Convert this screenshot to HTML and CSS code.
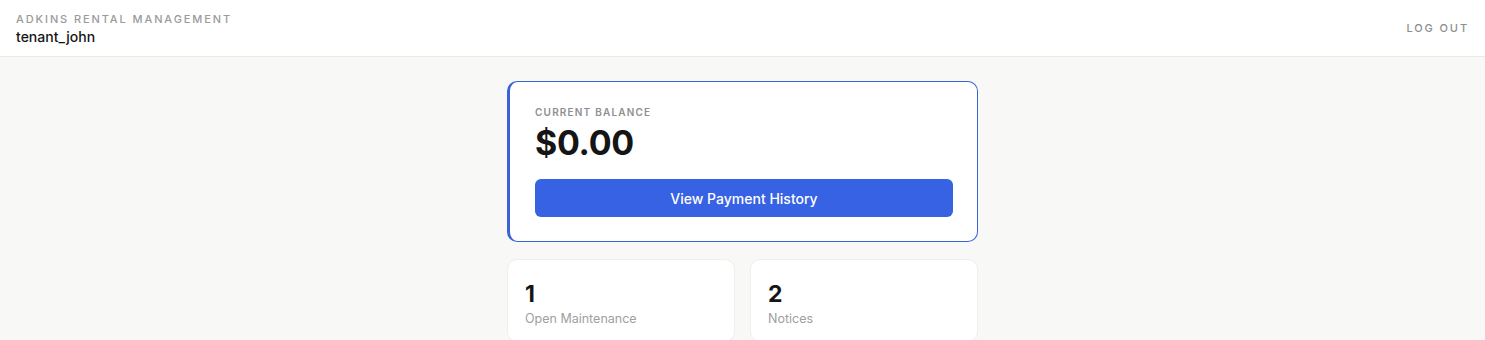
FILE: index.html
```html
<!DOCTYPE html>
<html>
<head>
<meta charset="utf-8">
<link rel="stylesheet" href="styles.css">
</head>
<body>
<header class="topbar">
  <div class="brand">
    <div class="brand-title">ADKINS RENTAL MANAGEMENT</div>
    <div class="brand-user">tenant_john</div>
  </div>
  <a class="logout">LOG OUT</a>
</header>
<main class="content">
  <section class="balance-card">
    <div class="balance-label">CURRENT BALANCE</div>
    <div class="balance-amount">$0.00</div>
    <button class="primary-btn">View Payment History</button>
  </section>
  <div class="stats">
    <div class="stat-card">
      <div class="stat-num">1</div>
      <div class="stat-label">Open Maintenance</div>
    </div>
    <div class="stat-card">
      <div class="stat-num">2</div>
      <div class="stat-label">Notices</div>
    </div>
  </div>
</main>
</body>
</html>
```
FILE: styles.css
```css
* { box-sizing: border-box; }
html, body { margin: 0; padding: 0; }
body {
  background: #f8f8f7;
  font-family: Inter, "Noto Sans", sans-serif;
  color: #151515;
}
.topbar {
  height: 57px;
  background: #ffffff;
  border-bottom: 1px solid #ebebe9;
  display: flex;
  align-items: center;
  justify-content: space-between;
  padding: 2px 16px 0;
}
.brand-title {
  font-size: 11px;
  font-weight: 500;
  letter-spacing: 1.9px;
  color: #9a9a9a;
  line-height: 14px;
}
.brand-user {
  font-size: 14px;
  font-weight: 500;
  color: #151515;
  line-height: 18px;
  margin-top: 2px;
}
.logout {
  font-size: 11px;
  font-weight: 500;
  letter-spacing: 1.9px;
  color: #8e8e8e;
  margin-top: -3px;
}
.content {
  width: 471px;
  margin: 24px auto 0;
}
.balance-card {
  background: #ffffff;
  border: 1px solid #3a63d8;
  border-left-width: 3px;
  border-radius: 10px;
  padding: 24px 24px 24px 25px;
}
.balance-label {
  font-size: 10px;
  font-weight: 600;
  letter-spacing: 1.2px;
  color: #8f8f8f;
  line-height: 13px;
}
.balance-amount {
  font-size: 34px;
  font-weight: 700;
  line-height: 40px;
  letter-spacing: -0.3px;
  color: #151515;
  margin-top: 4px;
}
.primary-btn {
  display: block;
  width: 100%;
  height: 38px;
  margin-top: 16px;
  border: none;
  border-radius: 6px;
  background: #3662e3;
  color: #ffffff;
  font-family: inherit;
  font-size: 14px;
  font-weight: 500;
}
.stats {
  display: grid;
  grid-template-columns: 1fr 1fr;
  gap: 15px;
  margin-top: 17px;
}
.stat-card {
  background: #ffffff;
  border: 1px solid #efefed;
  border-radius: 10px;
  padding: 20px 17px 14px;
}
.stat-num {
  font-size: 23px;
  font-weight: 700;
  line-height: 28px;
  color: #151515;
}
.stat-label {
  font-size: 12.5px;
  color: #a0a0a0;
  margin-top: 3px;
  line-height: 16px;
}
```
